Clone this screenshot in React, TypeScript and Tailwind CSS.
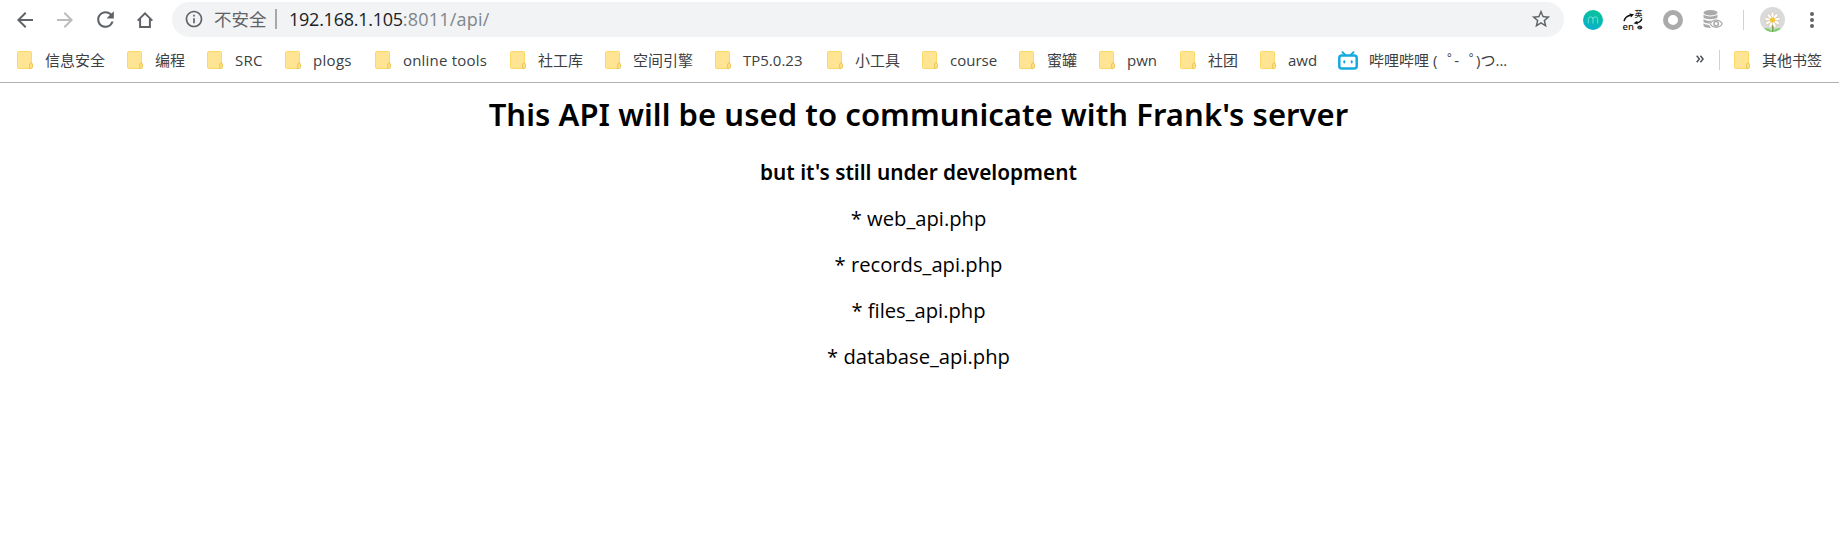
import { MdArrowBack, MdArrowForward, MdInfoOutline, MdRefresh, MdStarBorder } from "react-icons/md";

const bookmarks: { label: string; width: string; text: string }[] = [
  { label: "信息安全", width: "w-[110px]", text: "" },
  { label: "编程", width: "w-[80px]", text: "" },
  { label: "SRC", width: "w-[78px]", text: "tracking-[0.2px]" },
  { label: "plogs", width: "w-[90px]", text: "tracking-[0.3px]" },
  { label: "online tools", width: "w-[135px]", text: "tracking-[0.2px]" },
  { label: "社工库", width: "w-[95px]", text: "" },
  { label: "空间引擎", width: "w-[110px]", text: "" },
  { label: "TP5.0.23", width: "w-[112px]", text: "" },
  { label: "小工具", width: "w-[95px]", text: "" },
  { label: "course", width: "w-[97px]", text: "" },
  { label: "蜜罐", width: "w-[80px]", text: "" },
  { label: "pwn", width: "w-[81px]", text: "" },
  { label: "社团", width: "w-[80px]", text: "" },
  { label: "awd", width: "w-[78px]", text: "" },
];

const files = ["web_api.php", "records_api.php", "files_api.php", "database_api.php"];

function Folder() {
  return (
    <svg className="h-[18px] w-4 shrink-0" viewBox="0 0 16 18">
      <rect x="0.5" y="0.5" width="14" height="17" rx="1" fill="#ffe593" stroke="#fbd966" />
      <path d="M12.600 17.500v-3.400c0-1.600.5-2.200 1.500-2.200s1.400.7 1.400 1.800v2.300c0 .9-.6 1.500-1.500 1.500z" fill="#ffe17f" stroke="#ecc75a" />
    </svg>
  );
}

function Home() {
  return (
    <svg className="h-4 w-4" viewBox="0 0 16 16" fill="none" stroke="#5f6368" strokeWidth="2">
      <path d="M0.700 8.600L8 1.400l7.300 7.200" />
      <path d="M3.100 7v7.900h9.800V7" />
    </svg>
  );
}

function BiliLogo() {
  return (
    <svg className="h-[19px] w-5 shrink-0" viewBox="0 0 20 19" fill="none" stroke="#14a9e0" strokeLinecap="round">
      <path d="M4.500 1.200L7 3.600M15.500 1.200L13 3.600" strokeWidth="2" />
      <rect x="1.300" y="4.500" width="17.400" height="13" rx="2.500" strokeWidth="2.500" />
      <path d="M6.300 10.300v1.200M13.700 10.300v1.200" strokeWidth="2" />
    </svg>
  );
}

function MonogramIcon() {
  return (
    <svg className="h-5 w-5" viewBox="0 0 20 20">
      <defs>
        <linearGradient id="teal" x1="0.7" y1="0" x2="0.3" y2="1">
          <stop offset="0" stopColor="#08c496" />
          <stop offset="1" stopColor="#06afd0" />
        </linearGradient>
      </defs>
      <circle cx="10" cy="10" r="10" fill="url(#teal)" />
      <path d="M5.300 13.500V9.200a2.300 2.300 0 0 1 4.700 0v4.300M10 9.200a2.300 2.300 0 0 1 4.700 0v4.300" fill="none" stroke="#7de3d6" strokeWidth="0.900" />
    </svg>
  );
}

function TranslateIcon() {
  return (
    <svg className="h-[22px] w-[22px] overflow-visible" viewBox="0 0 22 22" fill="none">
      <text x="12.500" y="8" fontSize="8" fontWeight="500" fontFamily="Noto Sans CJK SC, sans-serif" fill="#222">英</text>
      <text x="0.500" y="20.500" fontSize="9.500" fontWeight="500" fontFamily="Noto Sans, sans-serif" fill="#111">en</text>
      <path d="M2 12.200C2.800 9 5.200 7 8.500 6.300" stroke="#111" strokeWidth="1.400" />
      <path d="M7.300 4.600l4.700.6-3 3.400z" fill="#111" />
      <path d="M19.800 9.600c-.4 2.300-2.200 3.600-4.800 4.300" stroke="#111" strokeWidth="1.400" />
      <path d="M15.300 11.700l-3.800 2.600 4.300 1.300z" fill="#111" />
      <ellipse cx="17.800" cy="18.500" rx="2.500" ry="1.900" fill="#333" />
      <circle cx="17.200" cy="18.900" r="0.700" fill="#aaa" />
    </svg>
  );
}

function DatabaseEyeIcon() {
  return (
    <svg className="h-5 w-5" viewBox="0 0 20 20" fill="#aaa">
      <ellipse cx="7.500" cy="2.800" rx="7" ry="2.800" />
      <path d="M.5 4.600c1.500 2.400 12.500 2.400 14 0v2.900c-1.500 2.200-12.500 2.200-14 0z" />
      <path d="M.5 9c1.500 1.700 5.500 2.100 8.300 1.600L6 13.500C3.500 13.400 1 12.800.5 11.800z" />
      <path d="M.5 13.300c1 1 3.300 1.500 5.500 1.600l2 3c-3.500.1-7-.7-7.500-2z" />
      <path d="M7.200 13.700c2.700-4.700 9.300-4.700 12 0-2.700 4.700-9.300 4.700-12 0z" fill="#fff" stroke="#aaa" strokeWidth="1.300" />
      <circle cx="13.200" cy="13.700" r="2.200" fill="#fff" stroke="#aaa" strokeWidth="1.500" />
    </svg>
  );
}

function Avatar() {
  return (
    <svg className="h-[25px] w-[25px]" viewBox="0 0 25 25">
      <defs>
        <clipPath id="face">
          <circle cx="12.500" cy="12.500" r="12.500" />
        </clipPath>
      </defs>
      <g clipPath="url(#face)">
        <rect width="25" height="25" fill="#dadada" />
        <path d="M12.800 15v10" stroke="#638c3c" strokeWidth="1.300" />
        <path d="M4.500 21.500c3.500-.8 6.500.5 8 3.500 1.500-3 4.500-4.300 8-3.500l-1 4h-14z" fill="#7ed06a" />
        {[0, 40, 80, 120, 160, 200, 240, 280, 320].map((a) => (
          <ellipse key={a} cx="12.500" cy="8.200" rx="1.500" ry="3.300" fill="#fff" stroke="#cdb98f" strokeWidth="0.500" transform={`rotate(${a} 12.5 13)`} />
        ))}
        <circle cx="12.500" cy="13" r="2.500" fill="#f7c531" />
      </g>
    </svg>
  );
}

export default function App() {
  return (
    <div className="flex min-h-[543px] w-full flex-col bg-white font-['Open_Sans','Noto_Sans_CJK_SC',sans-serif]">
      <header className="border-b border-[#b0b1b2] text-[#3c4043]">
        <div className="flex h-[39px] items-center pl-[13px]">
          <nav className="flex w-[159px] items-center text-[#5f6368]">
            <MdArrowBack className="mr-4 h-6 w-6" />
            <MdArrowForward className="mr-4 h-6 w-6 text-[#babcbe]" />
            <MdRefresh className="mr-[19px] h-[25px] w-[25px]" />
            <Home />
          </nav>
          <div className="mb-px flex h-[35px] w-[1392px] items-center rounded-full bg-[#f1f3f4] pr-[12px] pl-[12px] text-[18px] leading-6 whitespace-nowrap">
            <MdInfoOutline className="h-5 w-5 text-[#5f6368]" />
            <span className="ml-[10px] w-[61px] text-[17.5px] text-[#5f6368]">不安全</span>
            <span className="h-5 w-[2px] bg-[#a5a8ac]" />
            <span className="ml-[12px] tracking-[-0.25px] text-[#202124]">192.168.1.105</span>
            <span className="tracking-[0.2px] text-[#80868b]">:8011/api/</span>
            <MdStarBorder className="ml-auto h-[22px] w-[22px] text-[#5f6368]" />
          </div>
          <div className="ml-[19px] flex items-center">
            <MonogramIcon />
            <span className="ml-[19px] flex"><TranslateIcon /></span>
            <span className="ml-[19px] h-5 w-5 rounded-full border-[5px] border-[#aaa]" />
            <span className="ml-5 flex"><DatabaseEyeIcon /></span>
            <span className="ml-5 h-5 w-px bg-[#cfd1d4]" />
            <span className="ml-4 flex"><Avatar /></span>
            <span className="ml-[25px] flex flex-col gap-[2px]">
              <i className="h-1 w-1 rounded-full bg-[#5f6368]" />
              <i className="h-1 w-1 rounded-full bg-[#5f6368]" />
              <i className="h-1 w-1 rounded-full bg-[#5f6368]" />
            </span>
          </div>
        </div>
        <div className="flex h-[43px] items-center pb-px pl-[17px] text-[15px] leading-5 whitespace-nowrap">
          {bookmarks.map((b) => (
            <div key={b.label} className={`flex shrink-0 items-center gap-3 ${b.width}`}>
              <Folder />
              <span className={`pb-px ${b.text}`}>{b.label}</span>
            </div>
          ))}
          <div className="flex items-center gap-[11px]">
            <BiliLogo />
            <span className="pb-px">
              哔哩哔哩 ({" "}
              <span className="inline-block w-[13px] pl-[6px]">゜</span>-
              <span className="inline-block w-[17px] pl-[10px]">゜</span>)つ...
            </span>
          </div>
          <div className="ml-auto flex items-center pr-[17px]">
            <svg className="mb-[2px] h-[8px] w-[8px]" viewBox="0 0 8 8" fill="none" stroke="#4d5156" strokeWidth="1.500">
              <path d="M.7.700L3.400 4 .7 7.300M4.400.7L7.100 4 4.400 7.300" />
            </svg>
            <span className="ml-[15px] h-5 w-px bg-[#cfd1d4]" />
            <span className="ml-[14px] flex items-center gap-3">
              <Folder />
              <span className="pb-px">其他书签</span>
            </span>
          </div>
        </div>
      </header>
      <main className="flex flex-col items-center pt-[10px] pr-[2px] text-black">
        <h1 className="font-['Noto_Sans',sans-serif] text-[31px] leading-[42px] font-semibold tracking-[0.06px]">
          This API will be used to communicate with Frank's server
        </h1>
        <h2 className="mt-[23px] font-['Noto_Sans',sans-serif] text-[20.8px] leading-7 font-semibold">
          but it's still under development
        </h2>
        <div className="mt-[19px] flex flex-col items-center gap-5 text-[20.2px] leading-[26px]">
          {files.map((f) => (
            <p key={f}>* {f}</p>
          ))}
        </div>
      </main>
    </div>
  );
}
